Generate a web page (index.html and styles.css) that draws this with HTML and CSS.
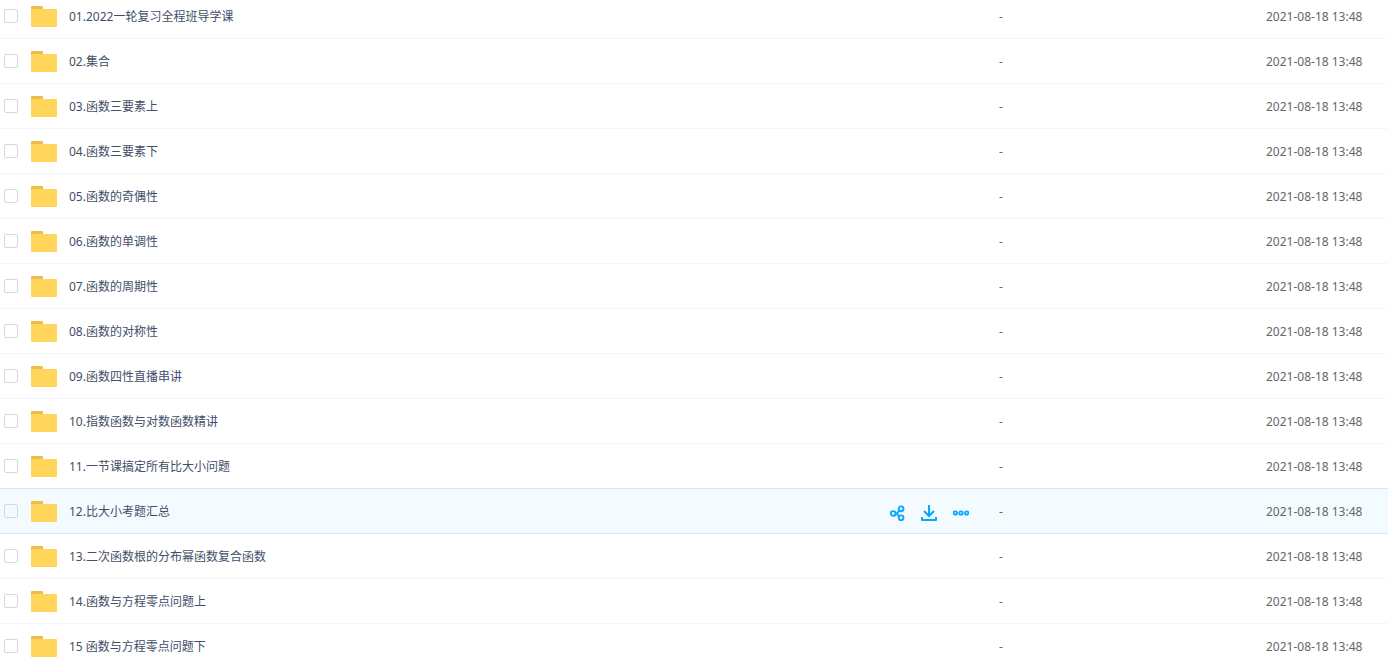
FILE: index.html
```html
<!DOCTYPE html>
<html lang="zh-CN">
<head>
  <meta charset="UTF-8" />
  <meta name="viewport" content="width=device-width, initial-scale=1.0"/>
  <title>全部文件</title>
  <link rel="stylesheet" href="styles.css">
</head>
<body>
  <table class="file-list">
    <colgroup>
      <col class="col-name">
      <col class="col-size">
      <col class="col-date">
    </colgroup>
    <tbody id="file-rows"></tbody>
  </table>

  <template id="row-actions">
    <div class="actions">
      <button type="button" aria-label="分享">
        <svg width="16" height="16" viewBox="0 0 16 16" fill="none" stroke="currentColor" stroke-width="1.9">
          <circle cx="4.2" cy="8.5" r="2.4"/>
          <circle cx="12.1" cy="3.8" r="2.4"/>
          <circle cx="12.1" cy="12.8" r="2.4"/>
          <path d="M6.4 8.5H8L10.4 5.4M7.4 8.6L10.2 11.3"/>
        </svg>
      </button>
      <button type="button" aria-label="下载">
        <svg width="16" height="16" viewBox="0 0 16 16" fill="none" stroke="currentColor" stroke-width="2">
          <path d="M8 0V11M3 6L8 11L13 6"/>
          <path d="M1 12V15H15V12" stroke-linejoin="round"/>
        </svg>
      </button>
      <button type="button" aria-label="更多">
        <svg width="16" height="16" viewBox="0 0 16 16" fill="#9fdcff" stroke="currentColor" stroke-width="1.6">
          <circle cx="2.3" cy="8" r="1.8"/>
          <circle cx="8" cy="8" r="1.8"/>
          <circle cx="13.7" cy="8" r="1.8"/>
        </svg>
      </button>
    </div>
  </template>

  <script src="script.js"></script>
</body>
</html>
```

FILE: styles.css
```css
body {
  margin: 0;
  background: #fff;
  color: #424e67;
  font-family: "Noto Sans", "Noto Sans CJK SC", sans-serif;
  font-size: 12px;
  line-height: 16px;
  overflow: hidden;
}

/* the list is scrolled a little way into its first row */
.file-list {
  width: 100%;
  margin-top: -6px;
  table-layout: fixed;
  border-collapse: separate;
  border-spacing: 0;
}

.col-size {
  width: 267px;
}

.col-date {
  width: 122px;
}

.file-list td {
  box-sizing: border-box;
  height: 45px;
  padding: 0;
  border-bottom: 1px solid #f2f6fd;
  vertical-align: middle;
  white-space: nowrap;
}

.file-list .active td {
  background: #f4fbff;
  border-bottom-color: #d6e9f8;
  box-shadow: 0 -1px 0 #d6e9f8;
}

.name-cell {
  display: flex;
  align-items: center;
  padding-left: 4px;
}

.check {
  appearance: none;
  box-sizing: border-box;
  width: 14px;
  height: 14px;
  margin: 0 13px 0 0;
  border: 1px solid #d3d9e2;
  border-radius: 2px;
  cursor: pointer;
}

.check:checked {
  background: #06a7ff;
  border-color: #06a7ff;
}

.folder {
  width: 26px;
  height: 21px;
  margin-right: 12px;
}

.file-name {
  flex: 1;
  min-width: 0;
  padding-top: 2px;
  overflow: hidden;
  text-overflow: ellipsis;
  cursor: pointer;
}

.actions {
  display: flex;
  gap: 16px;
  padding: 4px 30px 0 0;
}

.actions button {
  display: block;
  padding: 0;
  border: none;
  background: none;
  color: #06a7ff;
  cursor: pointer;
}

.actions svg {
  display: block;
}

.file-list .size,
.file-list .date {
  padding-top: 2px;
  color: #666;
}
```

FILE: script.js
```javascript
const files = [
  "01.2022一轮复习全程班导学课",
  "02.集合",
  "03.函数三要素上",
  "04.函数三要素下",
  "05.函数的奇偶性",
  "06.函数的单调性",
  "07.函数的周期性",
  "08.函数的对称性",
  "09.函数四性直播串讲",
  "10.指数函数与对数函数精讲",
  "11.一节课搞定所有比大小问题",
  "12.比大小考题汇总",
  "13.二次函数根的分布幂函数复合函数",
  "14.函数与方程零点问题上",
  "15 函数与方程零点问题下"
];
const activeIndex = 11;

const folderIcon = `
  <svg class="folder" viewBox="0 0 26 21" aria-hidden="true">
    <path d="M0 6V1Q0 0 1 0H11Q12 0 12 1V6Z" fill="#edbd49"/>
    <rect y="3" width="26" height="18" rx="1" fill="#ffd55c"/>
  </svg>`;

const rows = document.getElementById("file-rows");

files.forEach((name, i) => {
  const tr = document.createElement("tr");
  tr.innerHTML = `
    <td>
      <div class="name-cell">
        <input class="check" type="checkbox" id="file-${i}">
        ${folderIcon}
        <label class="file-name" for="file-${i}">${name}</label>
      </div>
    </td>
    <td class="size">-</td>
    <td class="date">2021-08-18 13:48</td>`;

  if (i === activeIndex) {
    tr.className = "active";
    const actions = document.getElementById("row-actions").content.cloneNode(true);
    tr.querySelector(".name-cell").appendChild(actions);
  }
  rows.appendChild(tr);
});
```
